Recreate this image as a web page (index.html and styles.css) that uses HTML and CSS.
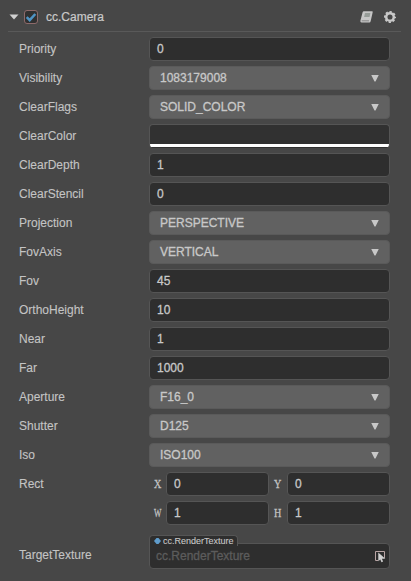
FILE: index.html
```
<!DOCTYPE html>
<html lang="en">
<head>
<meta charset="utf-8">
<title>cc.Camera</title>
<link rel="stylesheet" href="styles.css">
</head>
<body>
<section class="inspector">
  <header class="head">
    <svg class="fold" width="10" height="6" viewBox="0 0 10 6"><path d="M.5 .5h9L5 5.500z" fill="#d0d0d0"/></svg>
    <span class="check"><svg width="12" height="12" viewBox="0 0 12 12"><path d="M1.700 6.200l3 3L10.300 3" fill="none" stroke="#4e93c4" stroke-width="2.500"/></svg></span>
    <h1 class="title">cc.Camera</h1>
    <svg class="book" width="13" height="12" viewBox="0 0 13 12"><path d="M3.900 .3h8.200q.8 0 .6.900l-2 8.900q-.3 1.500-1.400 1.500H1.500Q.1 11.600.4 9.800L2.600 1.300Q2.900.3 3.900.3z" fill="#c6c6c6"/><path d="M5 2h5.400l-.9 4H4.100z" fill="#969c98"/><path d="M1.700 9.800h7.300" stroke="#777" stroke-width=".8"/></svg>
    <svg class="gear" width="12" height="12" viewBox="0 0 12 12" fill="none" stroke="#c8c8c8"><circle cx="6" cy="6" r="3.800" stroke-width="2.500"/><circle cx="6" cy="6" r="5.200" stroke-width="1.600" stroke-dasharray="2.300 1.784" stroke-dashoffset="1.150"/></svg>
  </header>
  <div class="rows">
    <div class="row"><label>Priority</label><div class="field">0</div></div>
    <div class="row"><label>Visibility</label><div class="field select">1083179008<i class="arrow"></i></div></div>
    <div class="row"><label>ClearFlags</label><div class="field select">SOLID_COLOR<i class="arrow"></i></div></div>
    <div class="row"><label>ClearColor</label><div class="field color"><span class="alpha"></span></div></div>
    <div class="row"><label>ClearDepth</label><div class="field">1</div></div>
    <div class="row"><label>ClearStencil</label><div class="field">0</div></div>
    <div class="row"><label>Projection</label><div class="field select">PERSPECTIVE<i class="arrow"></i></div></div>
    <div class="row"><label>FovAxis</label><div class="field select">VERTICAL<i class="arrow"></i></div></div>
    <div class="row"><label>Fov</label><div class="field">45</div></div>
    <div class="row"><label>OrthoHeight</label><div class="field">10</div></div>
    <div class="row"><label>Near</label><div class="field">1</div></div>
    <div class="row"><label>Far</label><div class="field">1000</div></div>
    <div class="row"><label>Aperture</label><div class="field select">F16_0<i class="arrow"></i></div></div>
    <div class="row"><label>Shutter</label><div class="field select">D125<i class="arrow"></i></div></div>
    <div class="row"><label>Iso</label><div class="field select">ISO100<i class="arrow"></i></div></div>
    <div class="row"><label>Rect</label><div class="pair"><b><span>X</span></b><div class="field">0</div><b><span>Y</span></b><div class="field">0</div></div></div>
    <div class="row"><label></label><div class="pair"><b><span class="wide">W</span></b><div class="field">1</div><b><span>H</span></b><div class="field">1</div></div></div>
  </div>
  <div class="row asset-row">
    <label>TargetTexture</label>
    <div class="field asset">
      <span class="tag"><svg width="7" height="6" viewBox="0 0 7 6"><path d="M2.500 0h2L7 3 4.500 6h-2L0 3z" fill="#5f9ccb"/></svg>cc.RenderTexture</span>
      <span class="placeholder">cc.RenderTexture</span>
      <svg class="picker" width="12" height="13" viewBox="0 0 12 13"><path d="M4 10.500H1.500V1.500h9V8" fill="none" stroke="#b9a5a5"/><path d="M4.300 2.500v8.700l2-1.700 1.200 2.700 1.600-.7-1.200-2.700h3.400z" fill="#d0d0d0"/></svg>
    </div>
  </div>
</section>
</body>
</html>
```
FILE: styles.css
```
* { box-sizing: border-box; }
body {
  margin: 0;
  background: #474747;
  color: #c4c4c4;
  font: 12px/16px "Liberation Sans", Arial, sans-serif;
}
.inspector { height: 581px; padding: 0 10px 0 8px; }
.head {
  display: flex;
  align-items: center;
  height: 32px;
  padding: 2px 5px 0 1px;
  border-bottom: 1px solid #595959;
}
.check {
  display: flex;
  align-items: center;
  justify-content: center;
  width: 14px;
  height: 14px;
  margin: 0 8px 0 5px;
  background: #303030;
  border: 1px solid #8d6a6a;
  border-radius: 3px;
}
.title { margin: 0; font-size: 12px; font-weight: normal; flex: 1; color: #cacaca; -webkit-text-stroke: .2px; }
.gear { margin-left: 11px; }
.rows { display: grid; gap: 5px; padding-top: 5px; }
.row { display: flex; align-items: center; height: 24px; padding: 0 11px; }
label { width: 130px; flex: none; -webkit-text-stroke: .1px; }
.field {
  flex: 1;
  display: flex;
  align-items: center;
  height: 24px;
  padding: 0 7px;
  background: #2e2e2e;
  border: 1px solid #555;
  border-radius: 4px;
  color: #c8c8c8;
  -webkit-text-stroke: .3px;
}
.select {
  justify-content: space-between;
  padding: 0 10px;
  background: #616161;
  border-color: #5a5a5a;
}
.arrow {
  width: 8px;
  height: 7px;
  background: #c8c8c8;
  clip-path: polygon(0 0, 100% 0, 56% 100%, 44% 100%);
}
.color { padding: 0; align-items: flex-end; overflow: hidden; border-bottom: 0; background: #313131; }
.alpha { flex: 1; height: 3px; background: #fff; margin: 0 -1px 1px; border-radius: 0 0 3px 3px; }
.pair { flex: 1; display: flex; align-items: center; }
.pair b {
  width: 17px;
  padding-left: 5px;
  font: 13px/16px "Liberation Serif", "Times New Roman", serif;
  -webkit-text-stroke: .3px;
}
.pair b + .field + b { width: 18px; }
.pair span { display: inline-block; transform: scaleX(.78); transform-origin: 0 50%; }
.pair .wide { transform: scaleX(.6); }
.asset-row { height: 26px; margin-top: 18px; }
.asset-row label { padding-bottom: 2px; }
.asset { position: relative; height: 26px; padding: 0 3px 0 6px; justify-content: space-between; border-top-left-radius: 0; }
.placeholder { color: #5c5c5c; }
.tag {
  position: absolute;
  left: -1px;
  top: -9px;
  display: flex;
  align-items: center;
  gap: 2px;
  width: 89px;
  height: 11px;
  padding: 0 0 0 4px;
  background: #2e2e2e;
  border: 1px solid #555;
  border-bottom: 0;
  border-radius: 4px 4px 0 0;
  font-size: 9px;
  line-height: 10px;
  -webkit-text-stroke: .1px;
}
```
